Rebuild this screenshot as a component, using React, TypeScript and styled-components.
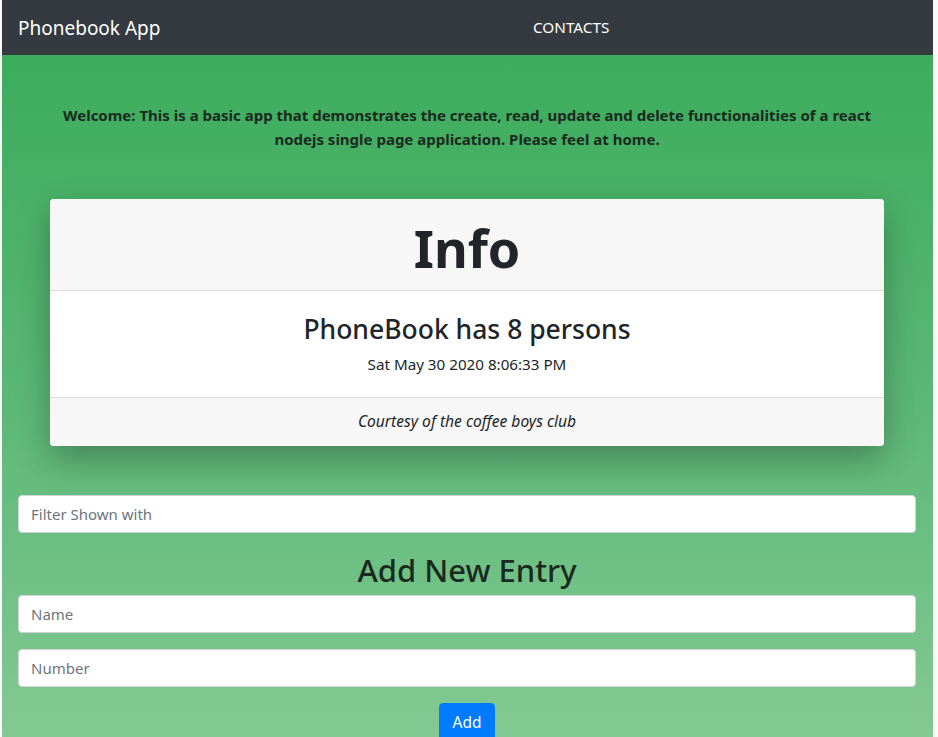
import styled, { createGlobalStyle } from 'styled-components';

const GlobalStyle = createGlobalStyle`
  html, body {
    margin: 0;
    padding: 0;
    background: #fafafa;
  }
  body {
    font-family: "Noto Sans", "Open Sans", sans-serif;
    color: #212529;
    font-size: 16px;
    line-height: 1.5;
  }
  * {
    box-sizing: border-box;
  }
`;

const Page = styled.div`
  margin: 0 5px 0 2px;
  min-height: 737px;
  background: linear-gradient(180deg, #37aa58 0%, #5cb877 55%, #84c993 100%);
`;

const NavBar = styled.nav`
  height: 55px;
  background: #343a40;
  display: flex;
  align-items: center;
  padding: 0 16px;
`;

const Brand = styled.a`
  color: #fff;
  font-size: 19px;
  text-decoration: none;
  width: 515px;
  margin-top: 2px;
`;

const NavLink = styled.a`
  color: #fff;
  font-size: 15.3px;
  text-transform: uppercase;
  text-decoration: none;
  margin-top: -1px;
`;

const Container = styled.main`
  padding: 0 17px 0 16px;
  display: flex;
  flex-direction: column;
`;

const Welcome = styled.p`
  margin: 48px 28px 48px;
  font-size: 15px;
  font-weight: 700;
  line-height: 24px;
  text-align: center;
  color: #1b2a1f;
`;

const Card = styled.section`
  margin: 0 32px;
  background: #fff;
  border-radius: 4px;
  overflow: hidden;
  box-shadow: 0 14px 34px rgba(0, 0, 0, 0.28);
`;

const CardHeader = styled.header`
  background: #f7f7f7;
  border-bottom: 1px solid #dcdcdc;
  height: 92px;
  display: flex;
  align-items: center;
  justify-content: center;
`;

const Title = styled.h1`
  margin: 0;
  font-size: 52px;
  font-weight: 700;
  line-height: 1;
  margin-top: 6px;
`;

const CardBody = styled.div`
  height: 106px;
  display: flex;
  flex-direction: column;
  align-items: center;
  padding-top: 19px;
`;

const Count = styled.h3`
  margin: 0 0 4px;
  font-size: 26.5px;
  font-weight: 500;
  line-height: 38px;
`;

const Stamp = styled.span`
  font-size: 15.2px;
  line-height: 24px;
`;

const CardFooter = styled.footer`
  background: #f7f7f7;
  border-top: 1px solid #dcdcdc;
  height: 49px;
  display: flex;
  align-items: center;
  justify-content: center;
  font-style: italic;
  font-size: 15.6px;
`;

const Field = styled.input<{ $gap?: number }>`
  display: block;
  width: 100%;
  height: 38px;
  padding: 6px 12px;
  font-family: inherit;
  font-size: 15px;
  color: #495057;
  background: #fff;
  border: 1px solid #ced4da;
  border-radius: 4px;
  margin-bottom: ${(p) => p.$gap ?? 0}px;

  &::placeholder {
    color: #6c757d;
  }
`;

const Form = styled.form`
  display: flex;
  flex-direction: column;
  margin-top: 49px;
`;

const SectionTitle = styled.h2`
  margin: 0 0 6px;
  font-size: 31px;
  font-weight: 500;
  line-height: 38px;
  text-align: center;
  color: #1b2a1f;
`;

const Button = styled.button`
  align-self: center;
  height: 38px;
  padding: 0 13px;
  font-family: inherit;
  font-size: 15.5px;
  color: #fff;
  background: #007bff;
  border: 1px solid #007bff;
  border-radius: 4px;
  margin-top: 16px;
`;

export default function App() {
  return (
    <>
      <GlobalStyle />
      <Page>
        <NavBar>
          <Brand href="#">Phonebook App</Brand>
          <NavLink href="#">Contacts</NavLink>
        </NavBar>
        <Container>
          <Welcome>
            Welcome: This is a basic app that demonstrates the create, read, update and delete
            functionalities of a react nodejs single page application. Please feel at home.
          </Welcome>
          <Card>
            <CardHeader>
              <Title>Info</Title>
            </CardHeader>
            <CardBody>
              <Count>PhoneBook has 8 persons</Count>
              <Stamp>Sat May 30 2020 8:06:33 PM</Stamp>
            </CardBody>
            <CardFooter>Courtesy of the coffee boys club</CardFooter>
          </Card>
          <Form onSubmit={(e) => e.preventDefault()}>
            <Field placeholder="Filter Shown with" $gap={18} />
            <SectionTitle>Add New Entry</SectionTitle>
            <Field placeholder="Name" $gap={16} />
            <Field placeholder="Number" />
            <Button type="submit">Add</Button>
          </Form>
        </Container>
      </Page>
    </>
  );
}
